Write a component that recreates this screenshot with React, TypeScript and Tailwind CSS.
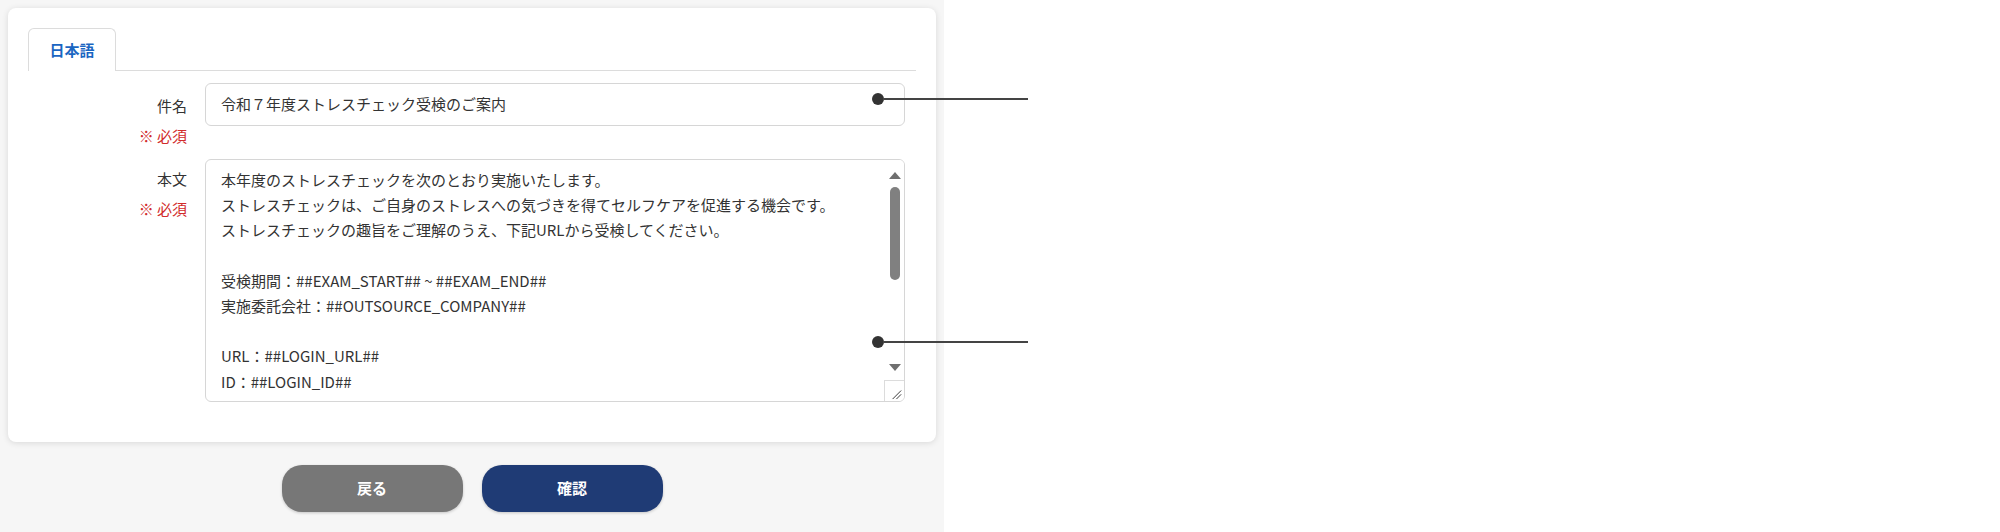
import React from "react";

/* ── Mail template edit form (Japanese tab) ── */

const FONT = { fontFamily: '"Noto Sans CJK JP", "Noto Sans", sans-serif' };

const BODY_LINES = [
  "本年度のストレスチェックを次のとおり実施いたします。",
  "ストレスチェックは、ご自身のストレスへの気づきを得てセルフケアを促進する機会です。",
  "ストレスチェックの趣旨をご理解のうえ、下記URLから受検してください。",
  "",
  "受検期間：##EXAM_START## ~ ##EXAM_END##",
  "実施委託会社：##OUTSOURCE_COMPANY##",
  "",
  "URL：##LOGIN_URL##",
  "ID：##LOGIN_ID##",
];

function Pointer({ top }: { top: number }) {
  // callout marker: dot inside the field, line running out to the right
  return (
    <div className="pointer-events-none absolute left-[872px] flex items-center" style={{ top }}>
      <div className="h-[12px] w-[12px] rounded-full bg-[#333]" />
      <div className="h-[2px] w-[144px] bg-[#444]" />
    </div>
  );
}

function Label({ text, pt }: { text: string; pt: string }) {
  return (
    <div className={`w-[159px] shrink-0 text-right text-[15px] leading-[25px] ${pt}`}>
      <div className="text-[#333]">{text}</div>
      <div className="mt-[5px] text-[#d12b2b]">※ 必須</div>
    </div>
  );
}

export default function App() {
  return (
    <div className="relative flex h-[532px] w-[2000px] bg-white" style={FONT}>
      <div className="h-full w-[944px] bg-[#f6f6f6] pt-[8px]">
        {/* ── Card ── */}
        <div className="mx-[8px] h-[434px] rounded-[8px] bg-white px-[20px] pt-[20px] shadow-[0_1px_6px_rgba(0,0,0,0.12)]">
          {/* Tabs */}
          <div className="flex border-b border-[#dcdcdc]">
            <div className="-mb-px flex h-[43px] w-[88px] items-center justify-center rounded-t-[6px] border border-b-0 border-[#dcdcdc] bg-white text-[15px] font-semibold text-[#1a66c2]">
              日本語
            </div>
          </div>

          {/* 件名 */}
          <div className="mt-[12px] flex items-start gap-[18px]">
            <Label text="件名" pt="pt-[10px]" />
            <div className="flex h-[43px] w-[700px] items-center rounded-[6px] border border-[#d6d6d6] bg-white px-[15px] text-[15px] text-[#333]">
              令和７年度ストレスチェック受検のご案内
            </div>
          </div>

          {/* 本文 */}
          <div className="mt-[11px] flex items-start gap-[18px]">
            <Label text="本文" pt="pt-[7px]" />
            <div className="relative h-[243px] w-[700px] overflow-hidden rounded-[6px] border border-[#d6d6d6] bg-white">
              <div className="pl-[15px] pr-[30px] pt-[7px] text-[15px] leading-[25.2px] text-[#333]">
                {BODY_LINES.map((line, i) => (
                  <div key={i} className="h-[25.2px] whitespace-nowrap">
                    {line}
                  </div>
                ))}
              </div>

              {/* scrollbar */}
              <div className="absolute right-0 top-0 flex h-[221px] w-[19px] flex-col items-center bg-white">
                <div className="mt-[12px] h-0 w-0 border-x-[6px] border-b-[7px] border-x-transparent border-b-[#6f6f6f]" />
                <div className="mt-[8px] h-[93px] w-[10px] rounded-full bg-[#808080]" />
                <div className="mt-auto mb-[10px] h-0 w-0 border-x-[6px] border-t-[7px] border-x-transparent border-t-[#6f6f6f]" />
              </div>
              {/* resize grip */}
              <div className="absolute bottom-0 right-0 h-[21px] w-[20px] border-l border-t border-[#dcdcdc] bg-white">
                <svg viewBox="0 0 20 21" className="h-full w-full">
                  <line x1="8" y1="19" x2="17" y2="10" stroke="#333" strokeWidth="1" />
                  <line x1="12" y1="19" x2="17" y2="14" stroke="#333" strokeWidth="1" />
                </svg>
              </div>
            </div>
          </div>
        </div>

        {/* ── Buttons ── */}
        <div className="mt-[23px] flex justify-center gap-[19px]">
          <button className="h-[47px] w-[181px] rounded-[20px] bg-[#777] text-[15px] font-bold text-white shadow-[0_1px_3px_rgba(0,0,0,0.2)]">
            戻る
          </button>
          <button className="h-[47px] w-[181px] rounded-[20px] bg-[#1f3b75] text-[15px] font-bold text-white shadow-[0_1px_3px_rgba(0,0,0,0.2)]">
            確認
          </button>
        </div>
      </div>

      <Pointer top={93} />
      <Pointer top={336} />
    </div>
  );
}
